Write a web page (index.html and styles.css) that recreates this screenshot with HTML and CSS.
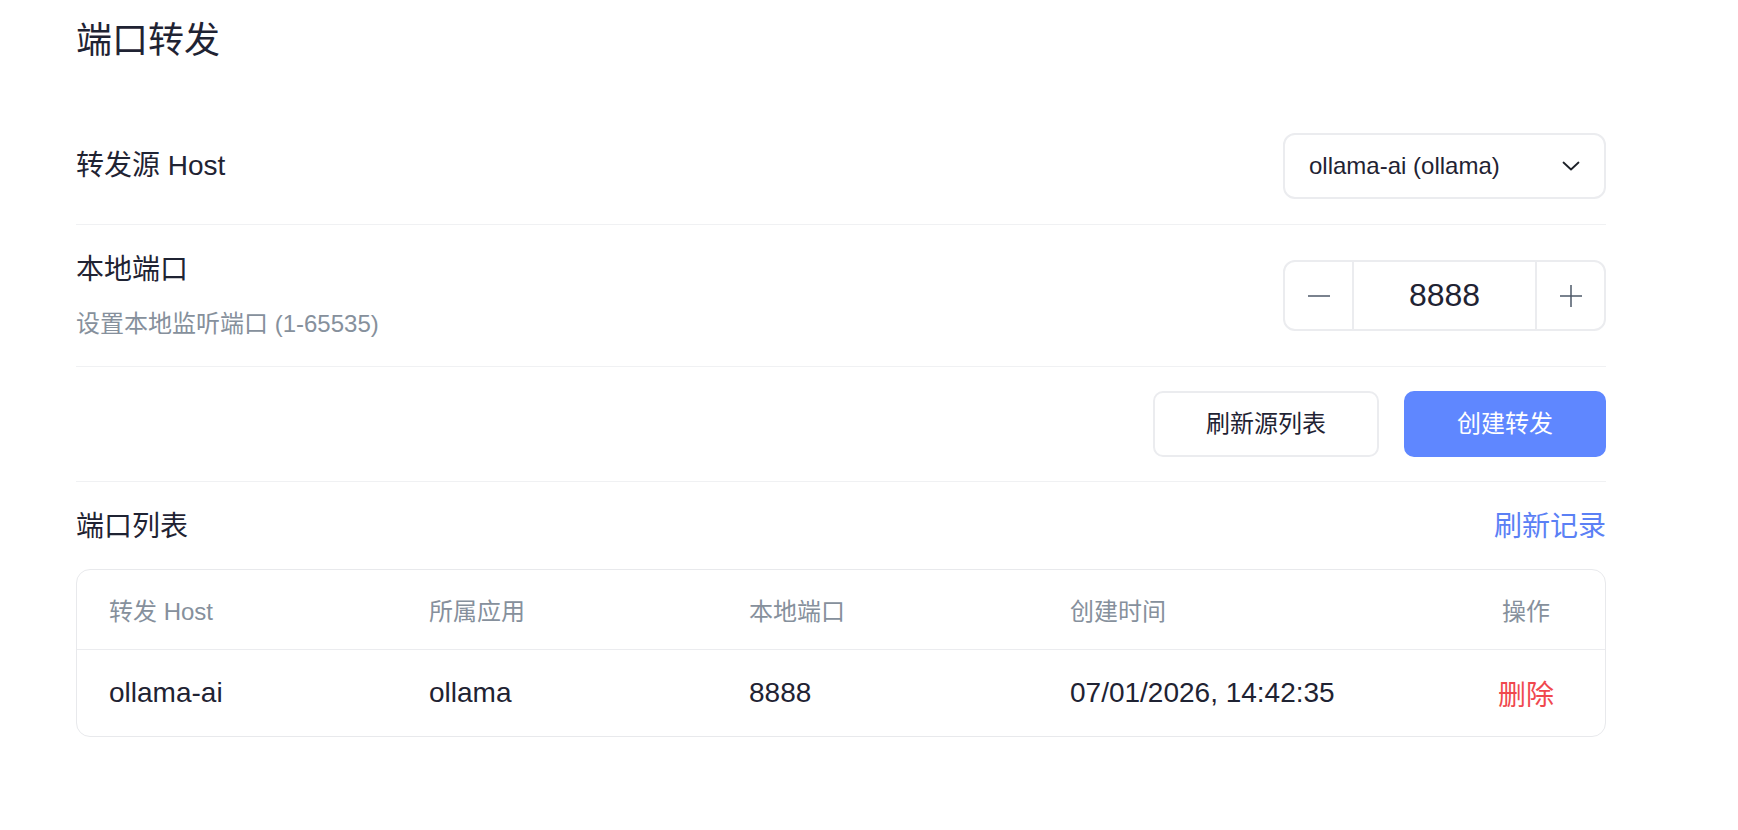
FILE: index.html
```html
<!DOCTYPE html>
<html lang="zh-CN">
<head>
<meta charset="utf-8">
<title>端口转发</title>
<link rel="stylesheet" href="styles.css">
</head>
<body>
<div class="page">
  <h1 class="title">端口转发</h1>

  <div class="form">
    <div class="row row-host">
      <div class="label">转发源 Host</div>
      <div class="select">
        <span class="select-text">ollama-ai (ollama)</span>
        <svg class="chevron" width="18" height="10" viewBox="0 0 18 10"><path d="M1.5 1.5 L9 8.5 L16.5 1.5" fill="none" stroke="#1d2129" stroke-width="1.8" stroke-linecap="round" stroke-linejoin="round"/></svg>
      </div>
    </div>

    <div class="row">
      <div class="label-block">
        <div class="label">本地端口</div>
        <div class="desc">设置本地监听端口 (1-65535)</div>
      </div>
      <div class="stepper">
        <div class="step-btn">
          <svg width="24" height="24" viewBox="0 0 24 24"><path d="M1 12 H23" stroke="#4e5969" stroke-width="1.5"/></svg>
        </div>
        <div class="step-value">8888</div>
        <div class="step-btn">
          <svg width="24" height="24" viewBox="0 0 24 24"><path d="M1 12 H23 M12 1 V23" stroke="#4e5969" stroke-width="1.5"/></svg>
        </div>
      </div>
    </div>

    <div class="row row-actions">
      <button class="btn btn-outline">刷新源列表</button>
      <button class="btn btn-primary">创建转发</button>
    </div>
  </div>

  <div class="list-head">
    <div class="list-title">端口列表</div>
    <a class="link">刷新记录</a>
  </div>

  <div class="table">
    <div class="tr thead">
      <div class="td">转发 Host</div>
      <div class="td">所属应用</div>
      <div class="td">本地端口</div>
      <div class="td">创建时间</div>
      <div class="td td-op">操作</div>
    </div>
    <div class="tr tbody">
      <div class="td">ollama-ai</div>
      <div class="td">ollama</div>
      <div class="td">8888</div>
      <div class="td">07/01/2026, 14:42:35</div>
      <div class="td td-op"><span class="danger">删除</span></div>
    </div>
  </div>
</div>
</body>
</html>
```

FILE: styles.css
```css
* { box-sizing: border-box; }

html, body {
  margin: 0;
  padding: 0;
  background: #ffffff;
}

body {
  font-family: "Liberation Sans", "Noto Sans CJK SC", sans-serif;
  color: #1d2129;
}

.page {
  width: 1606px;
  padding: 14px 0 0 76px;
}

.title {
  margin: 0 0 41px 0;
  font-size: 36px;
  line-height: 54px;
  font-weight: 400;
  color: #1f2333;
}

.row {
  display: flex;
  align-items: center;
  justify-content: space-between;
  padding: 24px 0;
  border-bottom: 1px solid #f0f1f3;
}

.row-host {
  padding-bottom: 25px;
}

.label {
  font-size: 28px;
  line-height: 42px;
  color: #1f2333;
}

.desc {
  margin-top: 15px;
  font-size: 24px;
  line-height: 36px;
  color: #86909c;
}

.select {
  width: 323px;
  height: 66px;
  border: 2px solid #ebecef;
  border-radius: 12px;
  display: flex;
  align-items: center;
  justify-content: space-between;
  padding: 0 24px 0 24px;
}

.select-text {
  font-size: 24px;
  line-height: 30px;
  color: #1f2333;
}

.chevron { display: block; }

.stepper {
  width: 323px;
  height: 71px;
  border: 2px solid #ebecef;
  border-radius: 12px;
  display: flex;
  align-items: stretch;
}

.step-btn {
  width: 67px;
  display: flex;
  align-items: center;
  justify-content: center;
}

.step-value {
  flex: 1;
  display: flex;
  align-items: center;
  justify-content: center;
  border-left: 2px solid #ebecef;
  border-right: 2px solid #ebecef;
  font-size: 32px;
  color: #1f2333;
}

.row-actions {
  justify-content: flex-end;
  gap: 25px;
}

.btn {
  height: 66px;
  padding: 0 51px;
  border-radius: 10px;
  font-family: "Liberation Sans", "Noto Sans CJK SC", sans-serif;
  font-size: 24px;
  line-height: 30px;
  cursor: pointer;
}

.btn-outline {
  background: #ffffff;
  border: 2px solid #ebecef;
  color: #1f2333;
}

.btn-primary {
  background: #5f87ff;
  border: 2px solid #5f87ff;
  color: #ffffff;
}

.list-head {
  display: flex;
  align-items: center;
  justify-content: space-between;
  margin: 24px 0 21px 0;
}

.list-title {
  font-size: 28px;
  line-height: 42px;
  color: #1f2333;
}

.link {
  font-size: 28px;
  line-height: 42px;
  color: #5b80f5;
  cursor: pointer;
}

.table {
  border: 1px solid #e8e9ec;
  border-radius: 14px;
  overflow: hidden;
}

.tr {
  display: grid;
  grid-template-columns: 320px 320px 321px 1fr 96px;
  align-items: center;
  padding: 0 31px 0 32px;
}

.thead {
  height: 80px;
  border-bottom: 1px solid #ebecef;
  font-size: 24px;
  color: #86909c;
}

.tbody {
  height: 86px;
  font-size: 28px;
  color: #1f2333;
}

.td-op {
  text-align: center;
}

.danger {
  color: #f0484e;
}
```
